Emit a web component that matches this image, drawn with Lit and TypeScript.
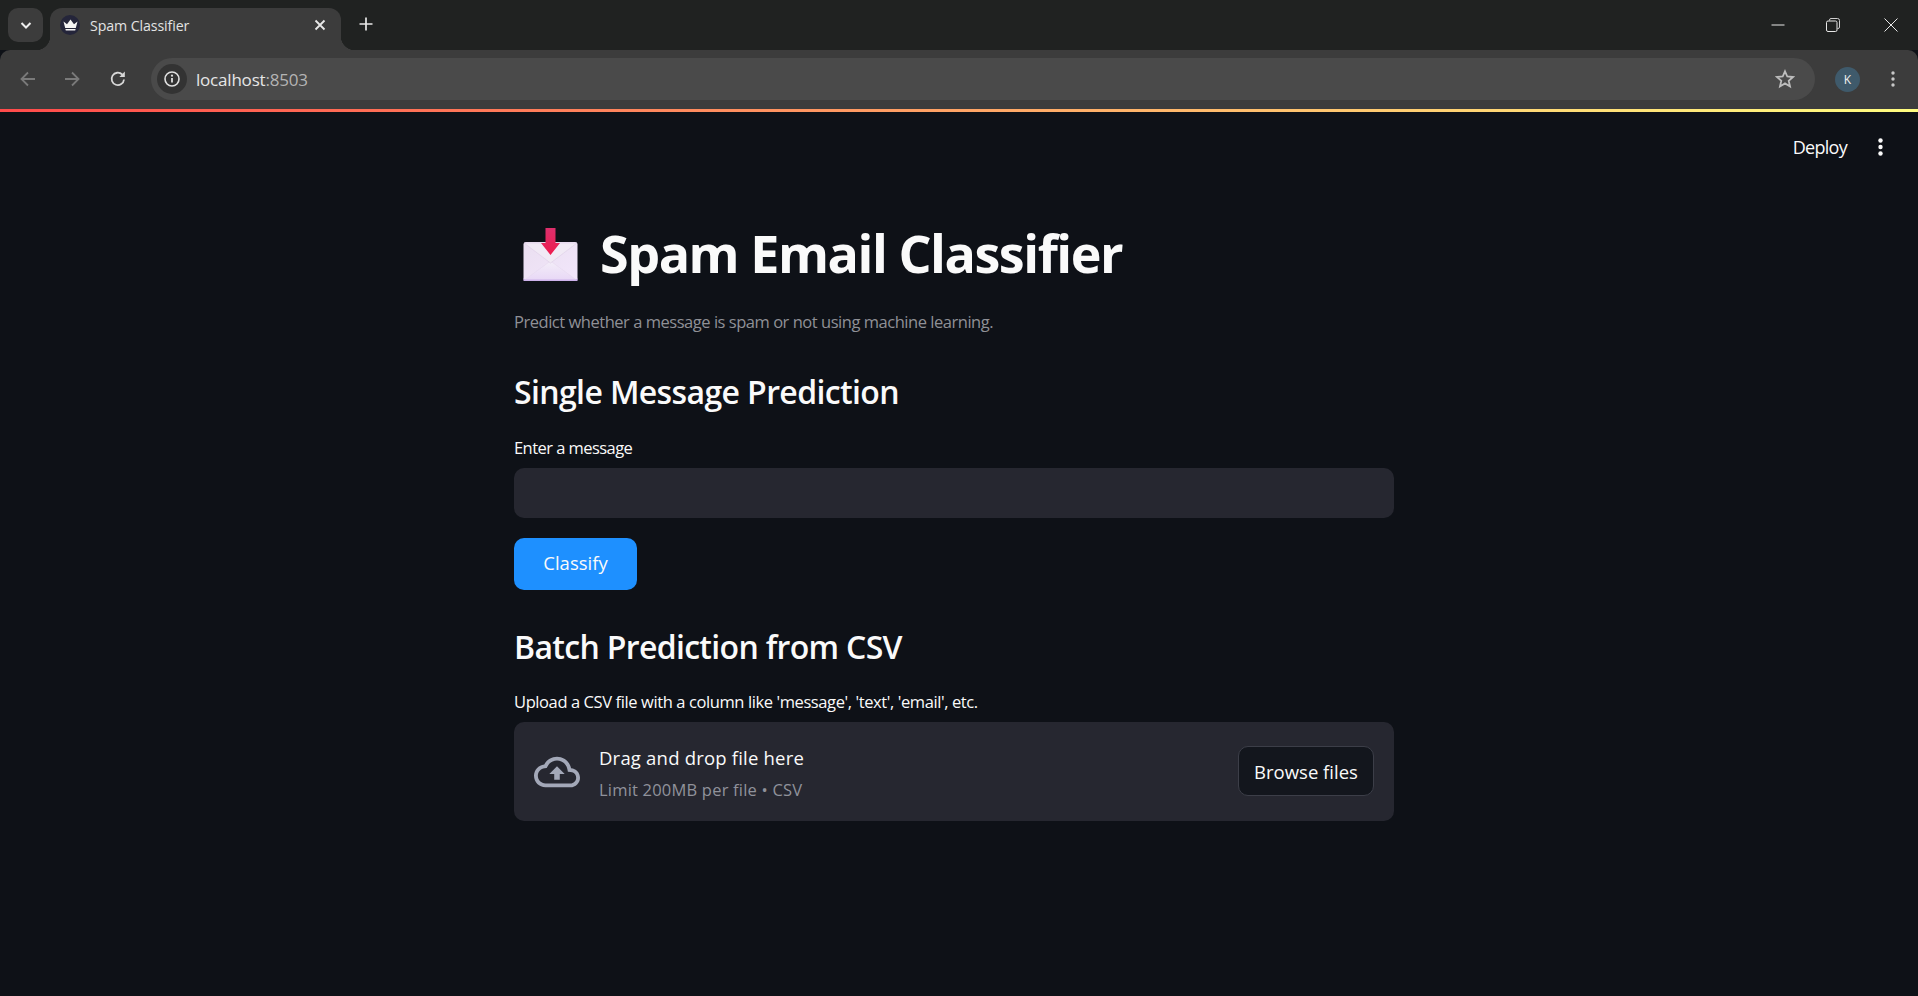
import { LitElement, html, css, svg } from 'lit';
import { customElement } from 'lit/decorators.js';

// browser frame around the page
@customElement('browser-bar')
class BrowserBar extends LitElement {
    static styles = css`
        :host {
            display: block;
            font-family: "Open Sans", "Noto Sans", sans-serif;
            color: #e3e3e3;
        }

        .strip {
            display: flex;
            height: 50px;
            background: #202221;
            padding: 8px 0 0 8px;
            box-sizing: border-box;
        }

        .tab-search {
            width: 35px;
            height: 34px;
            border-radius: 10px;
            background: #3c3c3c;
            display: flex;
            align-items: center;
            justify-content: center;
            margin-right: 7px;
        }

        .tab {
            position: relative;
            width: 291px;
            height: 42px;
            background: #3c3c3c;
            border-radius: 12px 12px 0 0;
            display: flex;
            align-items: center;
            padding: 0 15px 8px 10px;
            box-sizing: border-box;
        }

        .tab::before, .tab::after {
            content: '';
            position: absolute;
            bottom: 0;
            width: 14px;
            height: 14px;
        }

        .tab::before {
            left: -14px;
            background: radial-gradient(circle at 0 0, transparent 14px, #3c3c3c 14.5px);
        }

        .tab::after {
            right: -14px;
            background: radial-gradient(circle at 100% 0, transparent 14px, #3c3c3c 14.5px);
        }

        .favicon {
            width: 20px;
            height: 20px;
            border-radius: 50%;
            background: #24253a;
            display: flex;
            align-items: center;
            justify-content: center;
            margin-right: 10px;
        }

        .tab-title {
            flex: 1;
            font-size: 14.2px;
            letter-spacing: -0.1px;
            color: #e3e3e3;
        }

        .new-tab {
            margin: 9px 0 0 18px;
        }

        .window {
            margin-left: auto;
            display: flex;
            align-items: flex-start;
        }

        .window span {
            width: 55px;
            height: 34px;
            display: flex;
            align-items: center;
            justify-content: center;
        }

        .window span.close {
            width: 58px;
            padding-left: 4px;
            box-sizing: border-box;
        }

        .toolbar {
            height: 59px;
            background: #3c3c3c;
            border-radius: 10px 10px 0 0;
            display: flex;
            align-items: center;
            padding: 0 23px 1px 0;
            box-sizing: border-box;
        }

        .nav {
            width: 44px;
            display: flex;
            justify-content: center;
        }

        .nav.first {
            margin-left: 6px;
        }

        .nav.reload {
            margin-left: 2px;
        }

        .omnibox {
            flex: 1;
            height: 42px;
            margin: 0 20px 0 11px;
            border-radius: 21px;
            background: #4a4a4a;
            display: flex;
            align-items: center;
            padding: 0 20px 0 6px;
            box-sizing: border-box;
        }

        .chip {
            width: 30px;
            height: 30px;
            border-radius: 50%;
            background: #333333;
            display: flex;
            align-items: center;
            justify-content: center;
            margin-right: 9px;
        }

        .url {
            flex: 1;
            font-size: 17px;
            letter-spacing: -0.2px;
            color: #e6e6e6;
        }

        .url span {
            color: #b4b4b4;
        }

        .avatar {
            width: 25px;
            height: 25px;
            border-radius: 50%;
            background: #3f5a6b;
            color: #f1f1f1;
            font-size: 12px;
            display: flex;
            align-items: center;
            justify-content: center;
            margin-right: 31px;
        }

        .dots {
            width: 4px;
            display: flex;
            justify-content: center;
        }

        svg {
            display: block;
        }
    `;

    render() {
        return html`
            <div class="strip">
                <div class="tab-search">
                    <svg width="14" height="14" viewBox="0 0 14 14"><path d="M2.5 5l4.5 4.5L11.5 5" fill="none" stroke="#eee" stroke-width="2"/></svg>
                </div>
                <div class="tab">
                    <span class="favicon">
                        <svg width="15" height="12" viewBox="0 0 15 12"><path d="M0.5 2.5L4 5.2 7.5 0.5 11 5.2 14.5 2.5 12.8 9H2.2z M2.4 10h10.2l-.4 1.6H2.8z" fill="#f4f4f4"/></svg>
                    </span>
                    <span class="tab-title">Spam Classifier</span>
                    <svg width="12" height="12" viewBox="0 0 12 12"><path d="M1.5 1.5l9 9M10.5 1.5l-9 9" stroke="#e8e8e8" stroke-width="1.8"/></svg>
                </div>
                <div class="new-tab">
                    <svg width="14" height="14" viewBox="0 0 14 14"><path d="M7 .5v13M.5 7h13" stroke="#e8e8e8" stroke-width="1.7"/></svg>
                </div>
                <div class="window">
                    <span><svg width="14" height="14" viewBox="0 0 14 14"><path d="M0.5 7h13" stroke="#e8e8e8" stroke-width="1"/></svg></span>
                    <span><svg width="14" height="14" viewBox="0 0 14 14"><path d="M3.5 2.5V2a1.5 1.5 0 0 1 1.5-1.5h6.5A2 2 0 0 1 13.5 2.500V9A1.500 1.500 0 0 1 12 10.500h-.5" fill="none" stroke="#cfcfcf"/><rect x=".5" y="3" width="10.500" height="10.500" rx="1.500" fill="none" stroke="#e8e8e8"/></svg></span>
                    <span class="close"><svg width="14" height="14" viewBox="0 0 14 14"><path d="M.5.5l13 13M13.500.5l-13 13" stroke="#e8e8e8" stroke-width="1"/></svg></span>
                </div>
            </div>
            <div class="toolbar">
                <span class="nav first"><svg width="18" height="18" viewBox="0 0 18 18"><path d="M16 9H2.500M9 2.500L2.500 9 9 15.500" fill="none" stroke="#7a7a7a" stroke-width="1.800"/></svg></span>
                <span class="nav"><svg width="18" height="18" viewBox="0 0 18 18"><path d="M2 9h13.500M9 2.500L15.500 9 9 15.500" fill="none" stroke="#7a7a7a" stroke-width="1.800"/></svg></span>
                <span class="nav reload"><svg width="18" height="18" viewBox="0 0 18 18"><path d="M15 9.500A6.200 6.200 0 1 1 13.200 4.500" fill="none" stroke="#d8d8d8" stroke-width="1.800"/><path d="M15.800 1.500V7H10.300z" fill="#d8d8d8"/></svg></span>
                <div class="omnibox">
                    <span class="chip">
                        <svg width="16" height="16" viewBox="0 0 16 16"><circle cx="8" cy="8" r="7" fill="none" stroke="#e0e0e0" stroke-width="1.600"/><path d="M8 7v4.500" stroke="#e0e0e0" stroke-width="1.800"/><circle cx="8" cy="4.700" r="1.100" fill="#e0e0e0"/></svg>
                    </span>
                    <span class="url">localhost<span>:8503</span></span>
                    <svg width="20" height="20" viewBox="0 0 20 20"><path d="M10 2.300l2.300 5.200 5.700.5-4.300 3.800 1.300 5.600-5-3-5 3 1.300-5.600L2 8l5.700-.5z" fill="none" stroke="#bdbdbd" stroke-width="1.800"/></svg>
                </div>
                <span class="avatar">K</span>
                <span class="dots">
                    <svg width="4" height="16" viewBox="0 0 4 16"><circle cx="2" cy="2" r="1.700" fill="#c8c8c8"/><circle cx="2" cy="8" r="1.700" fill="#c8c8c8"/><circle cx="2" cy="14" r="1.700" fill="#c8c8c8"/></svg>
                </span>
            </div>
        `;
    }
}

const envelope = svg`
    <defs>
        <linearGradient id="env" x1="0" y1="0" x2="1" y2="1">
            <stop offset="0" stop-color="#eadff0"/>
            <stop offset="1" stop-color="#f2e6fb"/>
        </linearGradient>
        <linearGradient id="flap" x1="0" y1="0" x2="0" y2="1">
            <stop offset="0" stop-color="#f4eef8"/>
            <stop offset="1" stop-color="#e8d8f6"/>
        </linearGradient>
        <linearGradient id="arrow" x1="0" y1="0" x2="0" y2="1">
            <stop offset="0" stop-color="#dd2f6c"/>
            <stop offset="1" stop-color="#ee1c4e"/>
        </linearGradient>
    </defs>
    <rect x="0" y="14" width="54" height="39" rx="2.500" fill="url(#env)"/>
    <path d="M1 52L27 33 53 52z" fill="url(#flap)" stroke="#e6d8ef" stroke-width=".6"/>
    <path d="M0.500 15L27 35 53.500 15z" fill="#f1eaf5" stroke="#ddcfe6" stroke-width=".6"/>
    <path d="M2 51.500h50a2 2 0 0 0 2-2V53H0v-3.500a2 2 0 0 0 2 2z" fill="#cdb2ec"/>
    <path d="M22 0h10v15h4.500L27 27 17.500 15H22z" fill="url(#arrow)"/>
`;

@customElement('app-root')
class AppRoot extends LitElement {
    static styles = css`
        :host {
            display: block;
            height: 996px;
            overflow: hidden;
            background: #0e1117;
            color: #fafafa;
            font-family: "Open Sans", "Noto Sans", sans-serif;
        }

        .decoration {
            height: 3px;
            background: linear-gradient(90deg, #ff4b4b, #fffd80);
        }

        .header {
            height: 70px;
            display: flex;
            align-items: center;
            justify-content: flex-end;
            padding-right: 35px;
            box-sizing: border-box;
        }

        .deploy {
            font-size: 18px;
            letter-spacing: -0.7px;
            margin-right: 31px;
            color: #fafafa;
        }

        #main-container {
            width: 880px;
            margin: 37px 0 0 514px;
        }

        h1 {
            margin: 0;
            height: 68px;
            padding-bottom: 2px;
            display: flex;
            align-items: center;
            font-size: 52px;
            line-height: 68px;
            font-weight: 700;
            letter-spacing: -1.45px;
        }

        h1 svg {
            margin: 2px 22px 0 9px;
        }

        .sub {
            margin: 19px 0 0;
            font-size: 16.5px;
            line-height: 28px;
            letter-spacing: -0.47px;
            color: #8f9096;
        }

        h3 {
            margin: 34px 0 0;
            font-size: 32px;
            line-height: 44px;
            font-weight: 600;
            letter-spacing: -0.62px;
        }

        label {
            display: block;
            margin-top: 22px;
            font-size: 16.5px;
            line-height: 24px;
            letter-spacing: -0.55px;
        }

        input {
            display: block;
            width: 100%;
            height: 50px;
            margin-top: 8px;
            border: none;
            border-radius: 10px;
            background: #262730;
            box-sizing: border-box;
        }

        .classify {
            display: block;
            width: 123px;
            height: 52px;
            margin-top: 20px;
            padding: 0 0 3px;
            border: none;
            border-radius: 10px;
            background: #1e90ff;
            color: #fafafa;
            font-family: inherit;
            font-size: 18.500px;
            letter-spacing: 0;
        }

        h3.batch {
            margin-top: 35px;
            letter-spacing: -0.68px;
        }

        label.upload {
            margin-top: 21px;
            letter-spacing: -0.4px;
        }

        .dropzone {
            height: 99px;
            margin-top: 8px;
            border-radius: 10px;
            background: #262730;
            display: flex;
            align-items: center;
            padding: 0 20px;
            box-sizing: border-box;
        }

        .dropzone svg {
            margin-right: 19px;
            flex: none;
        }

        .hint {
            flex: 1;
            display: flex;
            flex-direction: column;
            gap: 6px;
            padding-top: 5px;
        }

        .hint b {
            font-weight: 400;
            font-size: 18.500px;
            line-height: 26px;
            letter-spacing: 0.2px;
        }

        .hint small {
            font-size: 16.500px;
            line-height: 26px;
            letter-spacing: 0.2px;
            color: #90929b;
        }

        .browse {
            width: 136px;
            height: 50px;
            margin-bottom: 1px;
            border: 1px solid #3c3e48;
            border-radius: 10px;
            background: #13161d;
            color: #fafafa;
            font-family: inherit;
            font-size: 18.500px;
            letter-spacing: 0;
        }
    `;

    render() {
        return html`
            <browser-bar></browser-bar>
            <div class="decoration"></div>
            <div class="header">
                <span class="deploy">Deploy</span>
                <svg width="5" height="18" viewBox="0 0 5 18"><circle cx="2.500" cy="2.500" r="2.200" fill="#fafafa"/><circle cx="2.500" cy="9" r="2.200" fill="#fafafa"/><circle cx="2.500" cy="15.500" r="2.200" fill="#fafafa"/></svg>
            </div>
            <div id="main-container">
                <h1>
                    <svg width="55" height="53" viewBox="0 0 54 53">${envelope}</svg>
                    Spam Email Classifier
                </h1>
                <p class="sub">Predict whether a message is spam or not using machine learning.</p>
                <h3>Single Message Prediction</h3>
                <label>Enter a message</label>
                <input type="text" />
                <button class="classify">Classify</button>
                <h3 class="batch">Batch Prediction from CSV</h3>
                <label class="upload">Upload a CSV file with a column like 'message', 'text', 'email', etc.</label>
                <div class="dropzone">
                    <svg width="46" height="46" viewBox="0 0 24 24"><path fill="#a3a8b8" d="M19.350 10.040C18.670 6.590 15.640 4 12 4 9.110 4 6.600 5.640 5.350 8.040 2.340 8.360 0 10.910 0 14c0 3.310 2.690 6 6 6h13c2.760 0 5-2.240 5-5 0-2.640-2.050-4.780-4.650-4.960zM19 18H6c-2.210 0-4-1.790-4-4 0-2.050 1.530-3.760 3.560-3.970l1.070-.110.500-.950C8.080 7.140 9.940 6 12 6c2.620 0 4.880 1.860 5.390 4.430l.300 1.500 1.530.110c1.560.100 2.780 1.410 2.780 2.960 0 1.650-1.350 3-3 3zM8 13h2.550v3h2.900v-3H16l-4-4z"/></svg>
                    <div class="hint">
                        <b>Drag and drop file here</b>
                        <small>Limit 200MB per file • CSV</small>
                    </div>
                    <button class="browse">Browse files</button>
                </div>
            </div>
        `;
    }
}
